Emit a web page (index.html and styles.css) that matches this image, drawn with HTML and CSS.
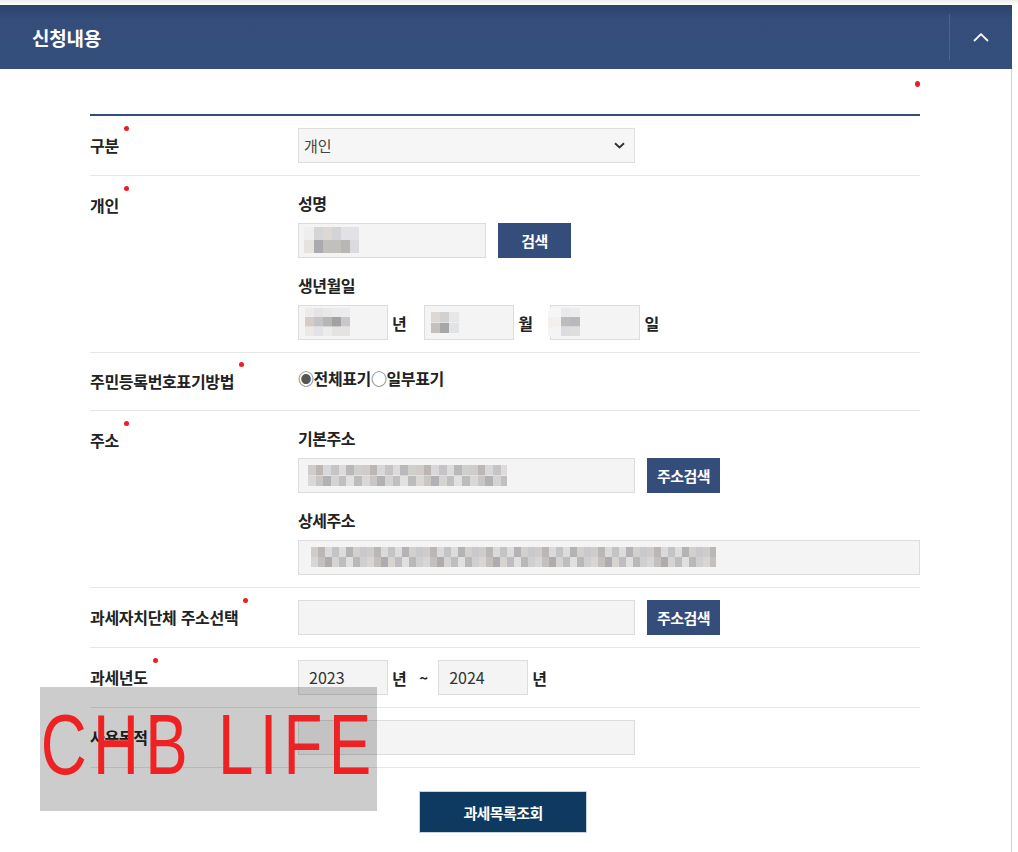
FILE: index.html
```html
<!DOCTYPE html>
<html lang="ko">
<head>
<meta charset="utf-8">
<title>신청내용</title>
<link rel="stylesheet" href="styles.css">
</head>
<body>
<div class="panel">
  <div class="panel-head">
    <h2 class="panel-title">신청내용</h2>
    <div class="toggle">
      <svg width="16" height="9" viewBox="0 0 16 9"><polyline points="1,8 8,1.2 15,8" fill="none" stroke="#fff" stroke-width="1.8"/></svg>
    </div>
  </div>
  <div class="panel-body">
    <div class="legend"><span class="legend-dot"></span></div>
    <div class="form">
      <div class="row">
        <div class="label"><span class="req">구분</span></div>
        <div class="field">
          <div class="select">
            <span>개인</span>
            <svg width="11" height="7" viewBox="0 0 11 7"><polyline points="1,1.2 5.5,5.5 10,1.2" fill="none" stroke="#333" stroke-width="1.9"/></svg>
          </div>
        </div>
      </div>

      <div class="row">
        <div class="label"><span class="req">개인</span></div>
        <div class="field col">
          <div class="sub">성명</div>
          <div class="inline">
            <div class="box w-name"><span class="mosaic m-name"></span></div>
            <button class="btn">검색</button>
          </div>
          <div class="sub next">생년월일</div>
          <div class="inline">
            <div class="box w-date"><span class="mosaic m-year"></span></div>
            <span class="unit">년</span>
            <div class="box w-date"><span class="mosaic m-month"></span></div>
            <span class="unit">월</span>
            <div class="box w-date"><span class="mosaic m-day"></span></div>
            <span class="unit">일</span>
          </div>
        </div>
      </div>

      <div class="row row-radio">
        <div class="label"><span class="req">주민등록번호표기방법</span></div>
        <div class="field">
          <div class="radios"><span class="rmark">◉</span>전체표기<span class="rmark">○</span>일부표기</div>
        </div>
      </div>

      <div class="row">
        <div class="label"><span class="req">주소</span></div>
        <div class="field col">
          <div class="sub">기본주소</div>
          <div class="inline">
            <div class="box w-mid"><span class="mosaic m-addr"></span></div>
            <button class="btn">주소검색</button>
          </div>
          <div class="sub next">상세주소</div>
          <div class="inline">
            <div class="box w-full"><span class="mosaic m-detail"></span></div>
          </div>
        </div>
      </div>

      <div class="row">
        <div class="label"><span class="req">과세자치단체 주소선택</span></div>
        <div class="field">
          <div class="inline">
            <div class="box w-mid"></div>
            <button class="btn">주소검색</button>
          </div>
        </div>
      </div>

      <div class="row">
        <div class="label"><span class="req">과세년도</span></div>
        <div class="field">
          <div class="inline">
            <div class="box w-date val">2023</div>
            <span class="unit flat">년</span>
            <span class="tilde">~</span>
            <div class="box w-date val">2024</div>
            <span class="unit">년</span>
          </div>
        </div>
      </div>

      <div class="row">
        <div class="label"><span class="req">사용목적</span></div>
        <div class="field">
          <div class="box w-mid"></div>
        </div>
      </div>
    </div>
    <div class="actions">
      <button class="btn-submit">과세목록조회</button>
    </div>
  </div>
</div>
<div class="watermark"><span class="wm-text">CHB LIFE</span></div>
</body>
</html>
```

FILE: styles.css
```css
* { box-sizing: border-box; }
html, body { margin: 0; padding: 0; background: #fff; }
body {
  font-family: "Noto Sans CJK KR", "Noto Sans", sans-serif;
  color: #222;
  width: 1018px;
  height: 852px;
  overflow: hidden;
  background: linear-gradient(#ececec, #fff 5px) no-repeat;
}
.panel {
  width: 1012px;
  margin-top: 5px;
}
.panel-head {
  height: 64px;
  display: flex;
  align-items: center;
  background: linear-gradient(#2c426a, #344d7a 22%, #354f7c);
}
.panel-title {
  flex: 1;
  margin: 0;
  padding-left: 32px;
  font-size: 19px;
  font-weight: 700;
  letter-spacing: -0.2px;
  color: #fff;
}
.toggle {
  width: 63px;
  height: 46px;
  border-left: 1px solid #4d6491;
  display: flex;
  align-items: center;
  justify-content: center;
}
.panel-body {
  border-right: 1px solid #d2d2d2;
  padding: 0 91px 0 90px;
  height: 800px;
  background: #fff;
}
.legend {
  display: flex;
  justify-content: flex-end;
  padding-top: 12px;
}
.legend-dot {
  width: 5px;
  height: 6px;
  border-radius: 50%;
  background: #ee1c24;
}
.form {
  margin-top: 27px;
  border-top: 2px solid #344d7a;
}
.row {
  display: flex;
  padding: 12px 0;
  border-bottom: 1px solid #e6e6e6;
}
.label {
  width: 208px;
  flex: none;
  font-size: 16px;
  font-weight: 700;
  letter-spacing: -0.3px;
  line-height: 35px;
  color: #222;
}
.row-radio .label { line-height: 33px; }
.req { position: relative; }
.req::after {
  content: "";
  position: absolute;
  right: -10px;
  top: -7px;
  width: 5px;
  height: 5px;
  border-radius: 50%;
  background: #ee1c24;
}
.field { flex: 1; }
.field.col { display: flex; flex-direction: column; }
.sub {
  font-size: 16px;
  font-weight: 700;
  letter-spacing: -0.5px;
  line-height: 22px;
  padding-top: 4px;
  margin-bottom: 9px;
  color: #222;
}
.sub.next { margin-top: 12px; }
.inline {
  display: flex;
  align-items: center;
}
.select {
  width: 337px;
  height: 35px;
  background: #f6f6f6;
  border: 1px solid #dedede;
  display: flex;
  align-items: center;
  justify-content: space-between;
  padding: 0 9px 0 5px;
  font-size: 15px;
  color: #444;
}
.box {
  height: 35px;
  background: #f4f4f4;
  border: 1px solid #dcdcdc;
  position: relative;
}
.w-name { width: 188px; }
.w-date { width: 90px; }
.w-mid { width: 337px; }
.w-full { width: 100%; }
.box.val {
  font-size: 16px;
  color: #333;
  line-height: 33px;
  padding-left: 10px;
}
.btn {
  margin-left: 12px;
  width: 73px;
  height: 35px;
  border: 0;
  background: #344d7a;
  color: #fff;
  font-family: inherit;
  font-size: 15px;
  font-weight: 700;
  letter-spacing: -0.6px;
  padding: 0;
}
.unit {
  font-size: 16px;
  font-weight: 700;
  letter-spacing: -0.5px;
  margin: 0 18px 0 4px;
  color: #222;
}
.unit.flat { margin-right: 0; }
.tilde {
  font-size: 15px;
  font-weight: 700;
  margin: 0 10px 0 13px;
  color: #222;
}
.radios {
  font-size: 16px;
  font-weight: 700;
  letter-spacing: -0.4px;
  line-height: 26px;
  color: #222;
}
.rmark { color: #555; font-weight: 400; }
.actions {
  display: flex;
  justify-content: center;
  padding-right: 4px;
  margin-top: 23px;
}
.btn-submit {
  width: 168px;
  height: 42px;
  background: #0e3a61;
  border: 1px solid #c9d2dc;
  color: #fff;
  font-family: inherit;
  font-size: 15px;
  font-weight: 700;
  letter-spacing: -0.6px;
}

/* redaction mosaics */
.mosaic {
  display: block;
  margin: 3px 0 0 5px;
}
.m-name {
  width: 55px;
  height: 26px;
  background:
    linear-gradient(to right, #e6e3df 0 10px, #abaaae 10px 19px, #c2c0bc 19px 37px, #b8b7b4 37px 46px, #dbdbdf 46px) bottom / 100% 50% no-repeat,
    linear-gradient(to right, #eeeeee 0 10px, #d5d4d6 10px 19px, #dcd9d5 19px 28px, #d3d4d8 28px 37px, #e2e2e6 37px) top / 100% 50% no-repeat;
}
.m-year {
  width: 45px;
  height: 28px;
  margin: 2px 0 0 6px;
  background:
    linear-gradient(to right, #eceaea 0 9px, #e4e4e6 9px 18px, #e8e8e8 18px 27px, #ebebed 27px) top / 100% 33% no-repeat,
    linear-gradient(to right, #d5ccc5 0 9px, #c2c4c7 9px 18px, #b6b6b7 18px 27px, #a2a2a5 27px 36px, #c8c8ca 36px) center / 100% 34% no-repeat,
    linear-gradient(to right, #ebe8e6 0 9px, #e3e3e5 9px 18px, #ebebeb 18px 27px, #e5e3e2 27px) bottom / 100% 33% no-repeat;
}
.m-month {
  width: 28px;
  height: 21px;
  margin: 6px 0 0 6px;
  background:
    linear-gradient(to right, #dcd8d5 0 9px, #d1d1d1 9px 18px, #e6e7e9 18px) top / 100% 50% no-repeat,
    linear-gradient(to right, #c5c0bd 0 9px, #a7a7a9 9px 18px, #e2e3e5 18px) bottom / 100% 50% no-repeat;
}
.m-day {
  width: 32px;
  height: 28px;
  margin: 2px 0 0 -3px;
  background:
    linear-gradient(to right, #f6f6f6 0 13px, #e9e9eb 13px 22px, #ececee 22px) top / 100% 33% no-repeat,
    linear-gradient(to right, #f3f0ee 0 13px, #bcbbbe 13px 22px, #b9b8bc 22px) center / 100% 34% no-repeat,
    linear-gradient(to right, #f4f4f4 0 13px, #dcdcde 13px 22px, #dedede 22px) bottom / 100% 33% no-repeat;
}
.m-addr {
  width: 199px;
  height: 21px;
  margin: 6px 0 0 9px;
  background:
    repeating-linear-gradient(to right, #cfcccb 0 8px, #bcb7b5 8px 15px, #d8d8da 15px 23px, #c6c4c7 23px 31px, #dddcda 31px 38px, #b9b9bb 38px 46px, #d1cfcc 46px 54px) top / 100% 50% no-repeat,
    repeating-linear-gradient(to right, #d9d8d6 0 8px, #c9c6c3 8px 15px, #b2b1b3 15px 23px, #d6d4d1 23px 31px, #c0bfc1 31px 38px, #e1e1e0 38px 46px, #bdbcbd 46px 54px) bottom / 100% 50% no-repeat;
}
.m-detail {
  width: 405px;
  height: 20px;
  margin: 6px 0 0 12px;
  background:
    repeating-linear-gradient(to right, #cfcdcc 0 7px, #bab7b5 7px 14px, #dadada 14px 21px, #c4c3c6 21px 28px, #dddcda 28px 35px, #b4b4b6 35px 42px, #d2cfcc 42px 49px, #c9c9cb 49px 56px) top / 100% 50% no-repeat,
    repeating-linear-gradient(to right, #d8d6d4 0 7px, #c3c0bd 7px 14px, #adacae 14px 21px, #d6d3d0 21px 28px, #bebdbf 28px 35px, #e0e0df 35px 42px, #b9b8b9 42px 49px, #cfcfd0 49px 56px) bottom / 100% 50% no-repeat;
}

/* overlay stamp */
.watermark {
  position: absolute;
  left: 40px;
  top: 687px;
  width: 337px;
  height: 124px;
  background: rgba(0, 0, 0, 0.2);
  padding-top: 14px;
  overflow: hidden;
}
.wm-text {
  display: block;
  font-family: "Liberation Sans", Arial, sans-serif;
  font-size: 86px;
  line-height: 86px;
  letter-spacing: 8.5px;
  color: #ee2222;
  white-space: nowrap;
  transform: scaleX(0.74);
  transform-origin: left center;
  padding-left: 1px;
}
```
